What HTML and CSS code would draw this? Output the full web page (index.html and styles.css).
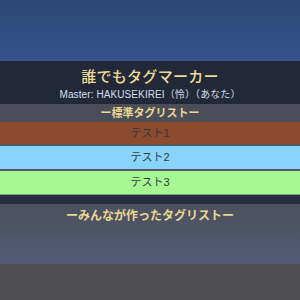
FILE: index.html
```html
<!DOCTYPE html>
<html lang="ja">
  <head>
    <meta charset="utf-8" />
    <title>誰でもタグマーカー</title>
    <link rel="stylesheet" href="styles.css">
  </head>
  <body>
    <div class="sky"></div>
    <div class="panel">
      <div class="header">
        <h1>誰でもタグマーカー</h1>
        <div class="master">Master: HAKUSEKIREI（怜）（あなた）</div>
      </div>
      <div class="section-title">ー標準タグリストー</div>
      <div class="tag tag-brown">テスト1</div>
      <div class="tag tag-blue">テスト2</div>
      <div class="tag tag-green">テスト3</div>
      <div class="gap"></div>
      <div class="user-list">
        <div class="section-title plain">ーみんなが作ったタグリストー</div>
      </div>
    </div>
    <div class="floor"></div>
  </body>
</html>
```

FILE: styles.css
```css
body {
  margin: 0;
  width: 300px;
  height: 300px;
  overflow: hidden;
  font-family: "Liberation Sans", "Noto Sans CJK JP", sans-serif;
  background: #4d4d4f;
}

.sky {
  height: 61px;
  background: linear-gradient(180deg, #2c4675 0%, #36528a 100%);
}

.header {
  height: 43px;
  background: #232838;
  text-align: center;
  overflow: hidden;
}
h1 {
  margin: 6px 0 0;
  font-size: 15px;
  font-weight: 500;
  line-height: 20px;
  color: #eadb95;
  letter-spacing: 0.3px;
}
.master {
  margin-top: 1px;
  font-size: 10px;
  line-height: 14px;
  color: #d3dfee;
  letter-spacing: 0.1px;
}

.section-title {
  height: 18px;
  line-height: 18px;
  background: #4b4e58;
  color: #e9d892;
  font-size: 11px;
  font-weight: bold;
  text-align: center;
}
.section-title.plain {
  background: none;
  font-size: 12px;
  height: 24px;
  line-height: 24px;
}

.tag {
  height: 23px;
  line-height: 23px;
  text-align: center;
  font-size: 11px;
  color: #34383e;
  border-top: 1px solid #55585f;
}
.tag-brown {
  height: 22px;
  background: #8c4a2f;
  border-top: 0;
  border-bottom: 1px solid #55585f;
}
.tag-blue {
  background: #88d4fb;
  border-bottom: 1px solid #55585f;
}
.tag-green {
  background: #a6f893;
  border-bottom: 1px solid #7f9c78;
}

.gap {
  height: 9px;
  background: #272c40;
}

.user-list {
  height: 60px;
  background: linear-gradient(180deg, #4c505e 0%, #525a74 100%);
}

.floor {
  height: 36px;
  background: #4e4e50;
}
```
